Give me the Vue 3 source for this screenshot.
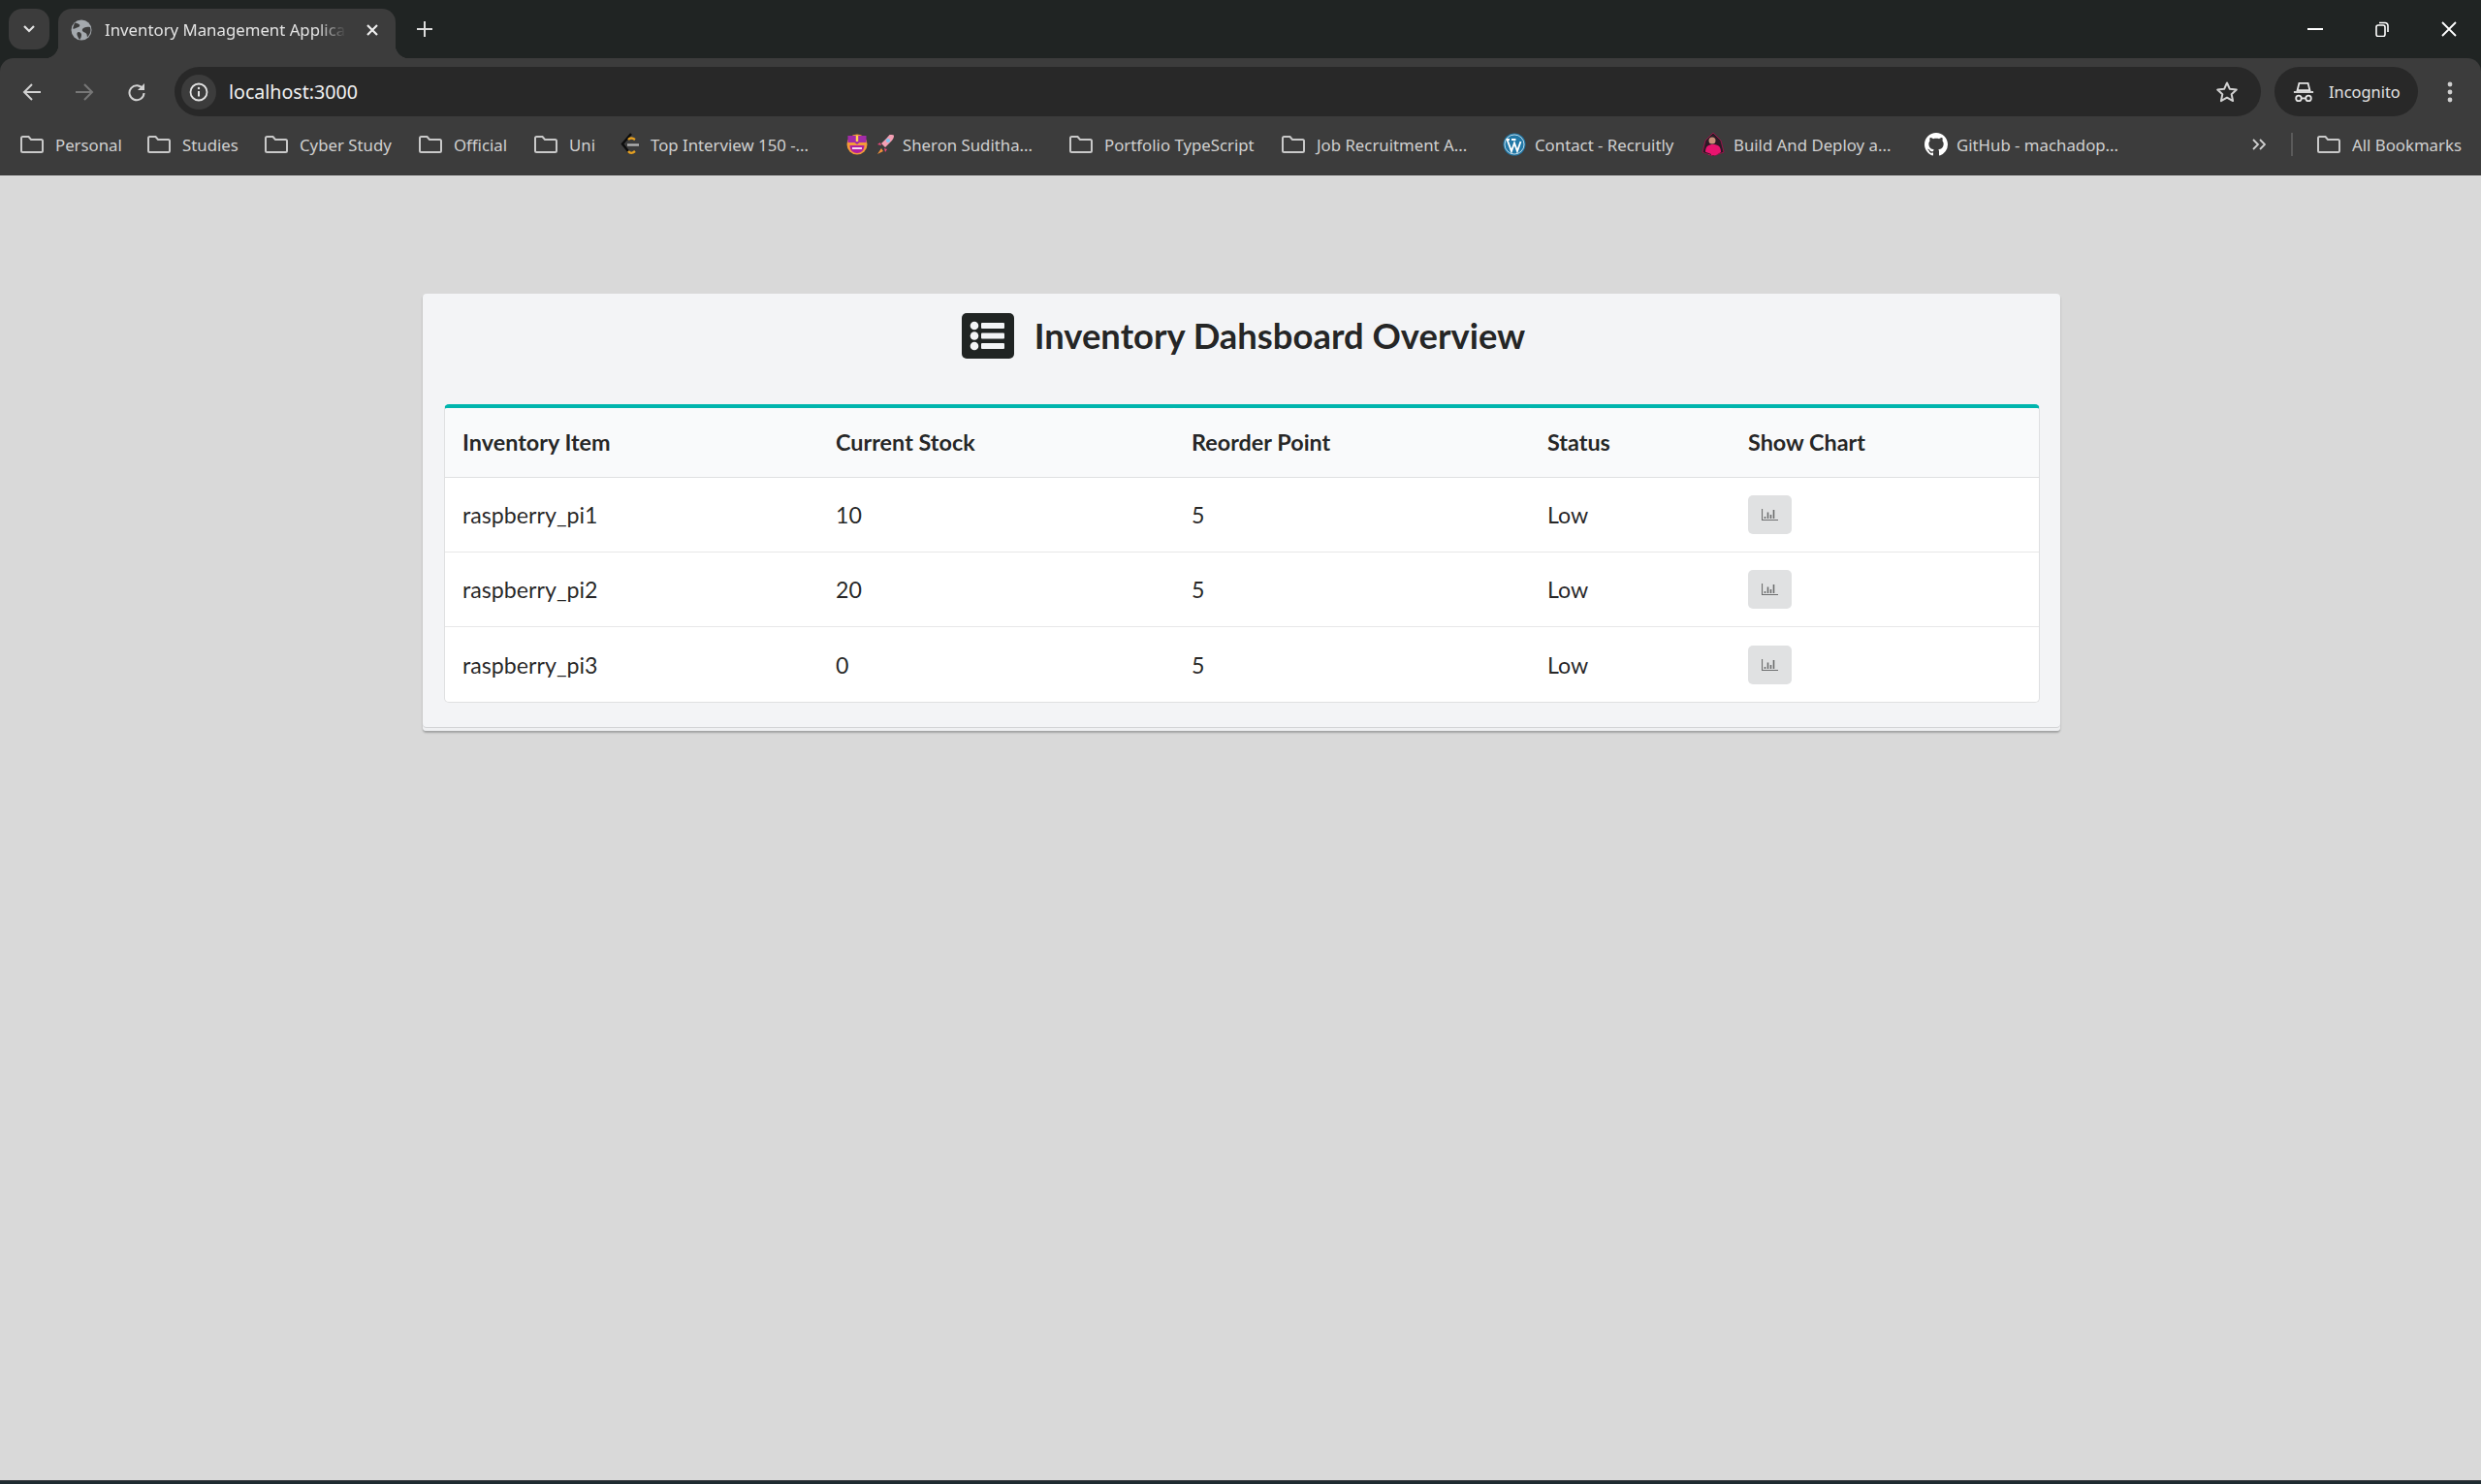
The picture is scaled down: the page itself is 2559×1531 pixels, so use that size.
<script setup>
const bookmarks = [
  { label: 'Personal', icon: 'folder' },
  { label: 'Studies', icon: 'folder' },
  { label: 'Cyber Study', icon: 'folder' },
  { label: 'Official', icon: 'folder' },
  { label: 'Uni', icon: 'folder' },
  { label: 'Top Interview 150 -...', icon: 'leetcode' },
  { label: 'Sheron Suditha...', icon: 'emoji' },
  { label: 'Portfolio TypeScript', icon: 'folder' },
  { label: 'Job Recruitment A...', icon: 'folder' },
  { label: 'Contact - Recruitly', icon: 'wordpress' },
  { label: 'Build And Deploy a...', icon: 'avatar' },
  { label: 'GitHub - machadop...', icon: 'github' }
]

const rows = [
  { name: 'raspberry_pi1', stock: 10, reorder: 5, status: 'Low' },
  { name: 'raspberry_pi2', stock: 20, reorder: 5, status: 'Low' },
  { name: 'raspberry_pi3', stock: 0, reorder: 5, status: 'Low' }
]
</script>

<template>
  <div class="window">
    <div class="tabstrip">
      <button class="tab-search">
        <svg width="14" height="10" viewBox="0 0 14 10"><path d="M2 2l5 5 5-5" fill="none" stroke="#e3e3e3" stroke-width="2.2" /></svg>
      </button>
      <div class="tab">
        <svg class="favicon" width="22" height="22" viewBox="0 0 22 22">
          <circle cx="11" cy="11" r="10.5" fill="#a4a9ae" />
          <path d="M4 3.5c2 .5 4 .5 5 2s-1 2.500-2.500 3S4 10 2 9.500zM20 8c-2-.5-4-.5-6 .5s-3 2.500-1.500 4 3.500 1 4 3l.5 3c2-2 3.500-5 3.500-7.500zM8 13c1.500 0 3 1 3 3s-1 4-2 5c-1-2-2-3-2.500-5S7 13 8 13z" fill="#3c3c3c" />
        </svg>
        <span class="tab-title">Inventory Management Application</span>
        <svg class="tab-close" width="14" height="14" viewBox="0 0 14 14"><path d="M2 2l10 10M12 2L2 12" stroke="#eee" stroke-width="2.200" /></svg>
      </div>
      <svg class="new-tab" width="16" height="16" viewBox="0 0 16 16"><path d="M8 0v16M0 8h16" stroke="#dcdcdc" stroke-width="2" /></svg>
      <div class="win-controls">
        <svg width="16" height="16" viewBox="0 0 16 16"><path d="M0 8h16" stroke="#fff" stroke-width="2" /></svg>
        <svg width="16" height="16" viewBox="0 0 16 16"><rect x="2" y="4" width="9" height="11.500" rx="2" fill="none" stroke="#fff" stroke-width="1.600" /><path d="M5 1.500h6a3 3 0 0 1 3 3V11" fill="none" stroke="#fff" stroke-width="1.600" /></svg>
        <svg width="16" height="16" viewBox="0 0 16 16"><path d="M1 1l14 14M15 1L1 15" stroke="#fff" stroke-width="1.800" /></svg>
      </div>
    </div>

    <div class="toolbar">
      <div class="nav-row">
        <div class="nav-buttons">
          <svg width="20" height="20" viewBox="0 0 20 20"><path d="M19 10H2M10 2l-8 8 8 8" fill="none" stroke="#d2d2d2" stroke-width="2" /></svg>
          <svg width="20" height="20" viewBox="0 0 20 20"><path d="M1 10h17M10 2l8 8-8 8" fill="none" stroke="#777" stroke-width="2" /></svg>
          <svg width="20" height="20" viewBox="0 0 20 20"><path d="M16.500 7A7.500 7.500 0 1 0 17.500 11" fill="none" stroke="#d2d2d2" stroke-width="2" /><path d="M18 1v7h-7z" fill="#d2d2d2" /></svg>
        </div>
        <div class="omnibox">
          <span class="info-chip">
            <svg width="20" height="20" viewBox="0 0 20 20"><circle cx="10" cy="10" r="8.500" fill="none" stroke="#e3e3e3" stroke-width="1.800" /><path d="M10 9v5.500" stroke="#e3e3e3" stroke-width="2" /><circle cx="10" cy="6" r="1.200" fill="#e3e3e3" /></svg>
          </span>
          <span class="url">localhost:3000</span>
          <svg class="star" width="24" height="24" viewBox="0 0 24 24"><path d="M12 2.500l2.900 6.300 6.900.8-5.100 4.700 1.400 6.800-6.100-3.400-6.100 3.400 1.400-6.800-5.100-4.700 6.900-.8z" fill="none" stroke="#d2d2d2" stroke-width="2" stroke-linejoin="round" /></svg>
        </div>
        <div class="incognito">
          <svg width="22" height="22" viewBox="0 0 24 24">
            <path d="M7 2h10l2 8H5z" fill="none" stroke="#e3e3e3" stroke-width="2" />
            <path d="M1 12h22" stroke="#e3e3e3" stroke-width="2" />
            <circle cx="6.500" cy="19" r="3" fill="none" stroke="#e3e3e3" stroke-width="2" />
            <circle cx="17.500" cy="19" r="3" fill="none" stroke="#e3e3e3" stroke-width="2" />
            <path d="M9.500 19h5" stroke="#e3e3e3" stroke-width="2" />
          </svg>
          <span>Incognito</span>
        </div>
        <svg class="menu-dots" width="6" height="24" viewBox="0 0 6 24"><circle cx="3" cy="4" r="2.400" fill="#cfcfcf" /><circle cx="3" cy="12" r="2.400" fill="#cfcfcf" /><circle cx="3" cy="20" r="2.400" fill="#cfcfcf" /></svg>
      </div>

      <div class="bookmarks">
        <div class="bookmark-list">
          <div v-for="b in bookmarks" :key="b.label" class="bookmark">
            <svg v-if="b.icon === 'folder'" width="24" height="18" viewBox="0 0 24 18"><path d="M1 2.500A1.500 1.500 0 0 1 2.500 1h6l2.500 3h10.500A1.500 1.500 0 0 1 23 5.500v10a1.500 1.500 0 0 1-1.500 1.500h-19A1.500 1.500 0 0 1 1 15.500z" fill="none" stroke="#c9c9c9" stroke-width="2" /></svg>
            <svg v-else-if="b.icon === 'leetcode'" class="fav-tight" width="20" height="24" viewBox="0 0 20 24">
              <path d="M11 1L2 11.500 8 19" fill="none" stroke="#0c0c0c" stroke-width="2.400" />
              <path d="M8 19c2 2.500 4 2.500 7 0M8 7c2-2 4-2 7 0" fill="none" stroke="#e6a020" stroke-width="2.400" />
              <path d="M7 12.500h12" stroke="#b0b0b0" stroke-width="2.400" />
            </svg>
            <svg v-else-if="b.icon === 'emoji'" class="emoji" width="52" height="24" viewBox="0 0 52 24">
              <circle cx="11" cy="12" r="10.500" fill="#f49a3a" />
              <path d="M1.500 3h19v7h-7l-2.500 2-2.500-2h-7z" fill="#a32ca8" />
              <path d="M11 3v6" stroke="#ffd34d" stroke-width="2.400" />
              <path d="M3.500 13h15c0 5-3.500 8-7.500 8s-7.500-3-7.500-8z" fill="#b01fa0" />
              <path d="M6 15h10v2H6z" fill="#f6d7ef" />
              <path d="M45 2c3 0 4 0 4 1s0 3-3 6l-6 6-4-4 6-6c1-1 2-3 3-3z" fill="#f4a0b5" />
              <circle cx="43" cy="8" r="2" fill="#7cc6ef" />
              <path d="M35 10l-3 2 4 1zM42 17l-2 3-1-4z" fill="#e8467c" />
              <path d="M36 16l-4 6 6-3z" fill="#f0913a" />
            </svg>
            <svg v-else-if="b.icon === 'wordpress'" class="fav" width="24" height="24" viewBox="0 0 24 24">
              <circle cx="12" cy="12" r="11.500" fill="#2178a7" />
              <circle cx="12" cy="12" r="10" fill="none" stroke="#fff" stroke-width=".7" />
              <path d="M4.500 7l4.500 12 3-8.500L15 19l3.500-10M3.500 7H7M9 7h4.500" fill="none" stroke="#fff" stroke-width="1.900" />
            </svg>
            <svg v-else-if="b.icon === 'avatar'" class="fav" width="24" height="24" viewBox="0 0 24 24">
              <path d="M12 0l8 8 3 12-11 4-11-4L4 8z" fill="#2b1a25" stroke="#b01050" stroke-width=".8" />
              <circle cx="11" cy="8" r="3.500" fill="#c98f78" />
              <path d="M4 20c0-6 3-8 8-8s8 2 8 8l-5 3H8z" fill="#e8146f" />
              <path d="M2 19l8 3v1l-8-3z" fill="#222" />
            </svg>
            <svg v-else class="fav" width="24" height="24" viewBox="0 0 16 16"><path d="M8 0C3.580 0 0 3.580 0 8c0 3.540 2.290 6.530 5.470 7.590.4.070.55-.17.55-.38 0-.19-.01-.82-.01-1.490-2.010.37-2.530-.49-2.690-.94-.09-.23-.48-.94-.82-1.130-.28-.15-.68-.52-.01-.53.63-.01 1.080.58 1.230.82.72 1.210 1.870.87 2.330.66.07-.52.28-.87.51-1.070-1.780-.2-3.640-.89-3.640-3.950 0-.87.31-1.590.82-2.150-.08-.2-.36-1.020.08-2.120 0 0 .67-.21 2.200.82.64-.18 1.320-.27 2-.27s1.360.09 2 .27c1.530-1.040 2.200-.82 2.200-.82.44 1.100.16 1.920.08 2.120.51.56.82 1.270.82 2.150 0 3.070-1.870 3.750-3.650 3.950.29.25.54.73.54 1.480 0 1.070-.01 1.930-.01 2.200 0 .21.15.46.55.38A8.013 8.013 0 0 0 16 8c0-4.420-3.580-8-8-8z" fill="#fff" /></svg>
            <span class="bookmark-label">{{ b.label }}</span>
          </div>
        </div>
        <svg class="overflow" width="14" height="12" viewBox="0 0 14 12"><path d="M1 1l5 5-5 5M8 1l5 5-5 5" fill="none" stroke="#cfcfcf" stroke-width="1.800" /></svg>
        <span class="bar-divider"></span>
        <div class="bookmark">
          <svg width="24" height="18" viewBox="0 0 24 18"><path d="M1 2.500A1.500 1.500 0 0 1 2.500 1h6l2.500 3h10.500A1.500 1.500 0 0 1 23 5.500v10a1.500 1.500 0 0 1-1.500 1.500h-19A1.500 1.500 0 0 1 1 15.500z" fill="none" stroke="#c9c9c9" stroke-width="2" /></svg>
          <span class="bookmark-label">All Bookmarks</span>
        </div>
      </div>
    </div>

    <main class="page">
      <section class="card">
        <h2 class="title">
          <svg class="title-icon" width="54" height="47" viewBox="0 0 54 47">
            <rect width="54" height="47" rx="5" fill="#202423" />
            <circle cx="13" cy="13" r="4.300" fill="#f3f4f6" />
            <circle cx="13" cy="23.500" r="4.300" fill="#f3f4f6" />
            <circle cx="13" cy="34" r="4.300" fill="#f3f4f6" />
            <rect x="20" y="10" width="24" height="6" rx="1" fill="#f3f4f6" />
            <rect x="20" y="20.500" width="24" height="6" rx="1" fill="#f3f4f6" />
            <rect x="20" y="31" width="24" height="6" rx="1" fill="#f3f4f6" />
          </svg>
          <span>Inventory Dahsboard Overview</span>
        </h2>

        <table class="stock-table">
          <colgroup>
            <col class="col-item" />
            <col class="col-num" />
            <col class="col-num" />
            <col class="col-status" />
            <col />
          </colgroup>
          <thead>
            <tr>
              <th>Inventory Item</th>
              <th>Current Stock</th>
              <th>Reorder Point</th>
              <th>Status</th>
              <th>Show Chart</th>
            </tr>
          </thead>
          <tbody>
            <tr v-for="row in rows" :key="row.name">
              <td>{{ row.name }}</td>
              <td>{{ row.stock }}</td>
              <td>{{ row.reorder }}</td>
              <td>{{ row.status }}</td>
              <td>
                <button class="chart-btn">
                  <svg width="17" height="12" viewBox="0 0 17 12">
                    <path d="M.5 0v11.500H17" fill="none" stroke="#6d6e6f" stroke-width="1.200" />
                    <path d="M3.500 8v2M6.500 3.500V10M9.500 6v4M12.500 1v9" stroke="#6d6e6f" stroke-width="1.600" />
                  </svg>
                </button>
              </td>
            </tr>
          </tbody>
        </table>
      </section>
    </main>
    <div class="taskbar-edge"></div>
  </div>
</template>

<style>
html,
body {
  margin: 0;
  background: #d9d9d9;
  overflow: hidden;
}
</style>

<style scoped>
.window {
  width: 2559px;
  height: 1531px;
  display: flex;
  flex-direction: column;
  background: #202423;
  font-family: "Noto Sans", sans-serif;
}

.tabstrip {
  height: 60px;
  flex: none;
  display: flex;
  align-items: flex-start;
  padding: 9px 0 0 9px;
  box-sizing: border-box;
}

.tab-search {
  width: 42px;
  height: 42px;
  padding: 0;
  border: 0;
  border-radius: 14px;
  background: #3c3c3c;
  display: flex;
  align-items: center;
  justify-content: center;
}

.tab {
  position: relative;
  width: 348px;
  height: 51px;
  margin-left: 9px;
  padding: 0 17px 8px 13px;
  box-sizing: border-box;
  background: #3c3c3c;
  border-radius: 14px 14px 0 0;
  display: flex;
  align-items: center;
  color: #e3e3e3;
  font-size: 16.800px;
}

.tab::before,
.tab::after {
  content: "";
  position: absolute;
  bottom: 0;
  width: 14px;
  height: 14px;
}

.tab::before {
  left: -14px;
  background: radial-gradient(circle at 0 0, transparent 14px, #3c3c3c 14.500px);
}

.tab::after {
  right: -14px;
  background: radial-gradient(circle at 100% 0, transparent 14px, #3c3c3c 14.500px);
}

.favicon {
  flex: none;
}

.tab-title {
  flex: 1;
  margin: 0 20px 0 13px;
  white-space: nowrap;
  overflow: hidden;
  -webkit-mask-image: linear-gradient(to right, #000 88%, transparent);
  mask-image: linear-gradient(to right, #000 88%, transparent);
}

.tab-close {
  flex: none;
}

.new-tab {
  margin: 13px 0 0 22px;
}

.win-controls {
  margin: 13px 25px 0 auto;
  display: flex;
  gap: 53px;
}

.toolbar {
  height: 121px;
  flex: none;
  background: #3c3c3c;
  border-radius: 14px 14px 0 0;
}

.nav-row {
  height: 51px;
  margin-top: 9px;
  display: flex;
  align-items: center;
  padding-left: 23px;
}

.nav-buttons {
  width: 157px;
  flex: none;
  display: flex;
  gap: 34px;
}

.omnibox {
  width: 2152px;
  flex: none;
  height: 51px;
  box-sizing: border-box;
  padding: 0 23px 0 7px;
  background: #282828;
  border-radius: 26px;
  display: flex;
  align-items: center;
  color: #f2f2f2;
  font-size: 19.600px;
}

.info-chip {
  width: 36px;
  height: 36px;
  border-radius: 50%;
  background: #3c3c3c;
  display: flex;
  align-items: center;
  justify-content: center;
}

.url {
  margin-left: 13px;
  flex: 1;
}

.incognito {
  width: 148px;
  height: 51px;
  margin-left: 14px;
  flex: none;
  box-sizing: border-box;
  padding-left: 19px;
  background: #282828;
  border-radius: 26px;
  display: flex;
  align-items: center;
  gap: 15px;
  color: #e3e3e3;
  font-size: 16.400px;
}

.menu-dots {
  margin-left: 30px;
}

.bookmarks {
  height: 42px;
  margin-top: 8px;
  display: flex;
  align-items: center;
  padding-left: 21px;
}

.bookmark-list {
  width: 2290px;
  flex: none;
  display: grid;
  grid-template-columns: 131px 121px 159px 119px 89px 233px 230px 219px 228px 205px 230px 1fr;
  align-items: center;
}

.bookmark {
  display: flex;
  align-items: center;
  gap: 12px;
  color: #d0d0d0;
  font-size: 16.800px;
  white-space: nowrap;
}

.fav {
  margin-right: -3px;
  flex: none;
}

.fav-tight {
  margin-right: -1px;
  flex: none;
}

.emoji {
  margin-right: -6px;
  flex: none;
}

.overflow {
  margin-left: 12px;
}

.bar-divider {
  width: 2px;
  height: 24px;
  margin: 0 25px 0 26px;
  background: #5a5a5a;
}

.page {
  flex: 1;
  background: #d9d9d9;
  padding: 122px 0 0 2px;
}

.card {
  width: 1689px;
  height: 451px;
  margin: 0 auto;
  padding: 0 22px;
  box-sizing: border-box;
  background: #f3f4f6;
  border-radius: 4px;
  box-shadow: inset 0 -3px 0 #eff0f2, inset 0 -4px 0 #d2d3d5, 0 2px 2px rgba(34, 36, 38, 0.3);
}

.title {
  height: 114px;
  margin: 0;
  padding: 0 0 28px 4px;
  box-sizing: border-box;
  display: flex;
  align-items: center;
  justify-content: center;
  gap: 21px;
  font-family: Lato, sans-serif;
  font-size: 36.400px;
  font-weight: 700;
  color: rgba(0, 0, 0, 0.87);
}

.title-icon {
  flex: none;
}

.stock-table {
  width: 1646px;
  table-layout: fixed;
  border-collapse: separate;
  border-spacing: 0;
  border: 1px solid #dfe0e1;
  border-top: 4px solid #00b5ad;
  border-radius: 5px;
  background: #fff;
  font-family: Lato, sans-serif;
  font-size: 23.400px;
  color: rgba(0, 0, 0, 0.87);
}

.col-item {
  width: 385px;
}

.col-num {
  width: 367px;
}

.col-status {
  width: 207px;
}

.stock-table th {
  height: 72px;
  padding: 0 18px 2px;
  box-sizing: border-box;
  background: #f9fafb;
  border-bottom: 1px solid #dfe0e1;
  border-radius: 3px 3px 0 0;
  text-align: left;
  font-weight: 700;
}

.stock-table td {
  height: 77px;
  padding: 0 18px;
  box-sizing: border-box;
  border-bottom: 1px solid #e7e7e8;
  font-size: 23.200px;
}

.stock-table tbody tr:last-child td {
  border-bottom: 0;
}

.chart-btn {
  width: 45px;
  height: 40px;
  padding: 0;
  border: 0;
  border-radius: 5px;
  background: #e0e1e2;
  display: flex;
  align-items: center;
  justify-content: center;
}

.taskbar-edge {
  height: 4px;
  flex: none;
  box-sizing: border-box;
  background: #1f2b30;
  border-top: 1px solid #3a3d41;
}
</style>
